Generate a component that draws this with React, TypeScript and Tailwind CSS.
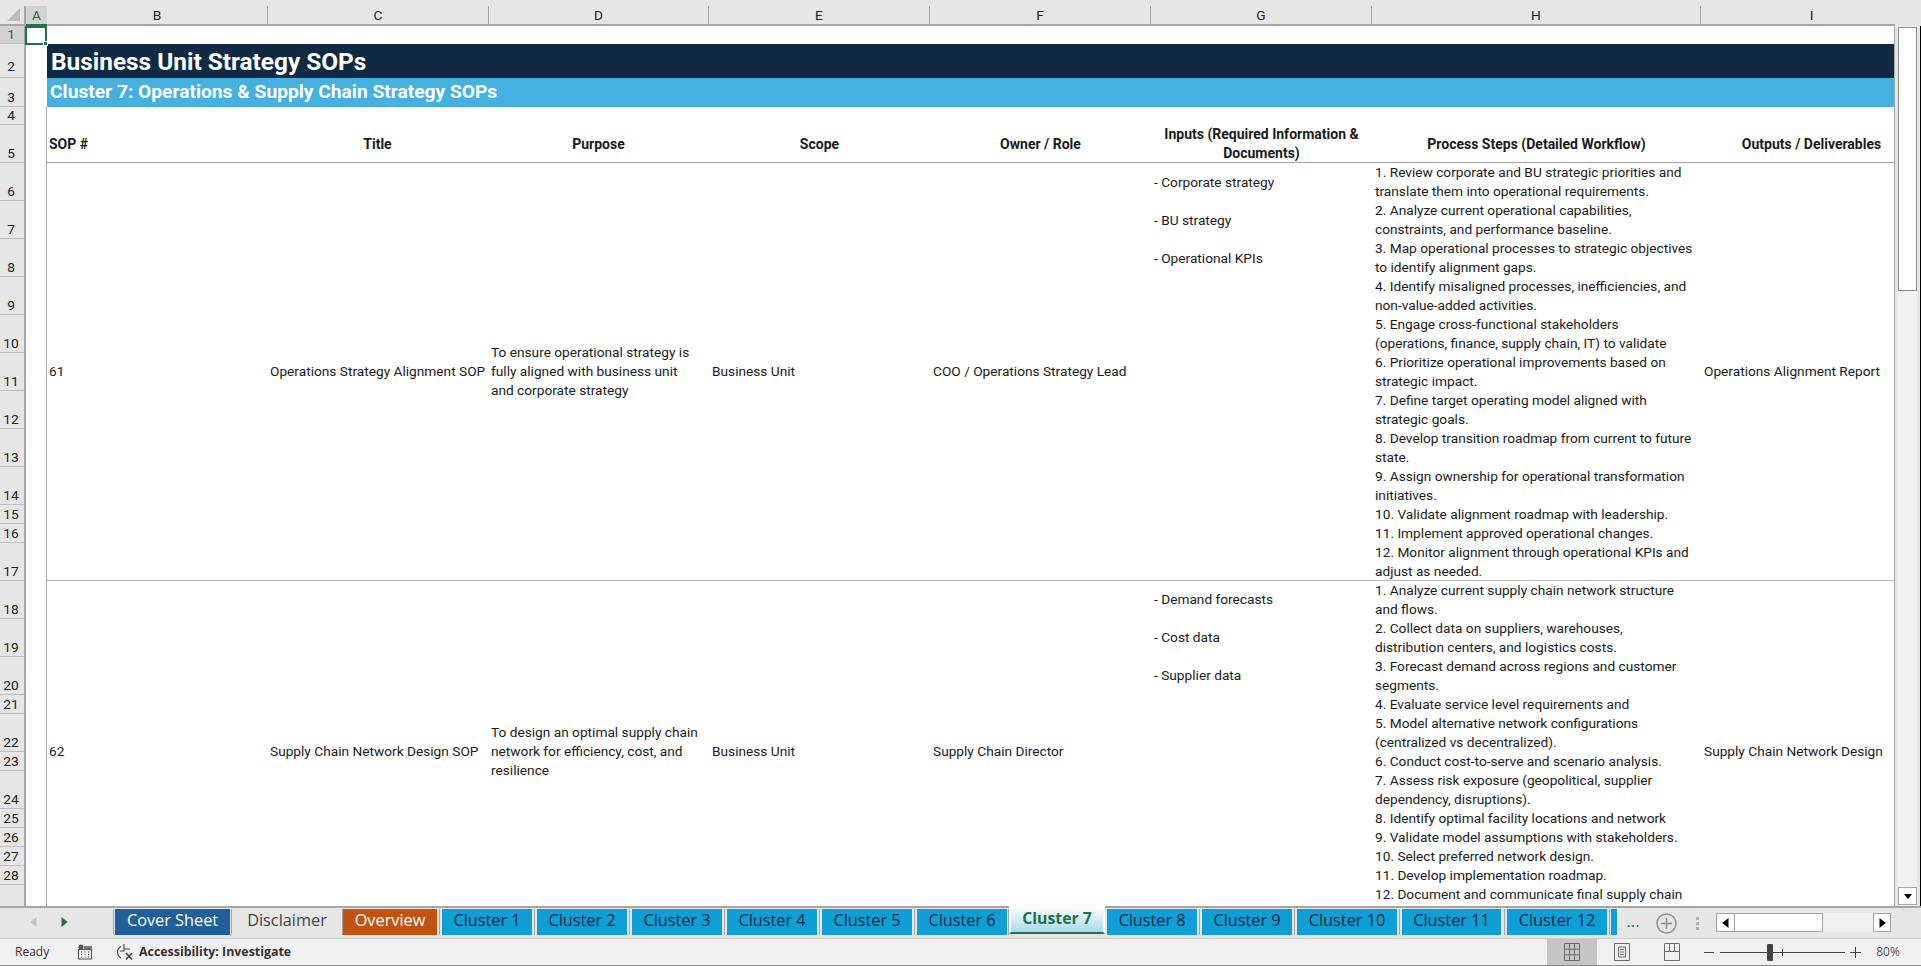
import React from "react";

const body = "font-['Roboto','Liberation_Sans',sans-serif]";
const ui = "font-['Open_Sans','Noto_Sans',sans-serif]";

const columns = [
  { l: "B", w: "w-[221px]" },
  { l: "C", w: "w-[221px]" },
  { l: "D", w: "w-[220px]" },
  { l: "E", w: "w-[221px]" },
  { l: "F", w: "w-[221px]" },
  { l: "G", w: "w-[221px]" },
  { l: "H", w: "w-[329px]" },
  { l: "I", w: "w-[221px]" },
];

const rowHeaders = [
  ["1", "h-[18px]"], ["2", "h-[34px] pb-[2px]"], ["3", "h-[29px]"], ["4", "h-[18px]"], ["5", "h-[38px]"],
  ["6", "h-[38px]"], ["7", "h-[38px]"], ["8", "h-[38px]"], ["9", "h-[38px]"], ["10", "h-[38px]"],
  ["11", "h-[38px]"], ["12", "h-[38px]"], ["13", "h-[38px]"], ["14", "h-[38px]"], ["15", "h-[19px]"],
  ["16", "h-[19px]"], ["17", "h-[38px]"], ["18", "h-[38px]"], ["19", "h-[38px]"], ["20", "h-[38px]"],
  ["21", "h-[19px]"], ["22", "h-[38px]"], ["23", "h-[19px]"], ["24", "h-[38px]"], ["25", "h-[19px]"],
  ["26", "h-[19px]"], ["27", "h-[19px]"], ["28", "h-[19px]"],
];

const rec1 = [
  "1. Review corporate and BU strategic priorities and",
  "translate them into operational requirements.",
  "2. Analyze current operational capabilities,",
  "constraints, and performance baseline.",
  "3. Map operational processes to strategic objectives",
  "to identify alignment gaps.",
  "4. Identify misaligned processes, inefficiencies, and",
  "non-value-added activities.",
  "5. Engage cross-functional stakeholders",
  "(operations, finance, supply chain, IT) to validate",
  "6. Prioritize operational improvements based on",
  "strategic impact.",
  "7. Define target operating model aligned with",
  "strategic goals.",
  "8. Develop transition roadmap from current to future",
  "state.",
  "9. Assign ownership for operational transformation",
  "initiatives.",
  "10. Validate alignment roadmap with leadership.",
  "11. Implement approved operational changes.",
  "12. Monitor alignment through operational KPIs and",
  "adjust as needed.",
];

const rec2 = [
  "1. Analyze current supply chain network structure",
  "and flows.",
  "2. Collect data on suppliers, warehouses,",
  "distribution centers, and logistics costs.",
  "3. Forecast demand across regions and customer",
  "segments.",
  "4. Evaluate service level requirements and",
  "5. Model alternative network configurations",
  "(centralized vs decentralized).",
  "6. Conduct cost-to-serve and scenario analysis.",
  "7. Assess risk exposure (geopolitical, supplier",
  "dependency, disruptions).",
  "8. Identify optimal facility locations and network",
  "9. Validate model assumptions with stakeholders.",
  "10. Select preferred network design.",
  "11. Develop implementation roadmap.",
  "12. Document and communicate final supply chain",
];

type Rec = {
  h: string; pad: string; sop: string; title: string; purpose: string[]; owner: string;
  inputs: string[]; steps: string[]; output: string;
};
const records: Rec[] = [
  {
    h: "h-[418px] border-b border-[#b8b8b8]", pad: "pt-[10px]", sop: "61", title: "Operations Strategy Alignment SOP",
    purpose: ["To ensure operational strategy is", "fully aligned with business unit", "and corporate strategy"],
    owner: "COO / Operations Strategy Lead",
    inputs: ["- Corporate strategy", "- BU strategy", "- Operational KPIs"],
    steps: rec1, output: "Operations Alignment Report",
  },
  {
    h: "h-[340px]", pad: "pt-[9px]", sop: "62", title: "Supply Chain Network Design SOP",
    purpose: ["To design an optimal supply chain", "network for efficiency, cost, and", "resilience"],
    owner: "Supply Chain Director",
    inputs: ["- Demand forecasts", "- Cost data", "- Supplier data"],
    steps: rec2, output: "Supply Chain Network Design",
  },
];

const tabs = [
  { t: "Cover Sheet", w: "w-[115px]", c: "bg-[#215f9a] text-white", s: "w-[3px]" },
  { t: "Disclaimer", w: "w-[108px]", c: "bg-[#e6e6e6] text-[#444444]", s: "w-[2px]" },
  { t: "Overview", w: "w-[94px]", c: "bg-[#c05311] text-white", s: "w-[5px]" },
  { t: "Cluster 1", w: "w-[90px]", c: "bg-[#0f9ed5] text-[#0c2a3a]", s: "w-[5px]" },
  { t: "Cluster 2", w: "w-[90px]", c: "bg-[#0f9ed5] text-[#0c2a3a]", s: "w-[5px]" },
  { t: "Cluster 3", w: "w-[90px]", c: "bg-[#0f9ed5] text-[#0c2a3a]", s: "w-[5px]" },
  { t: "Cluster 4", w: "w-[90px]", c: "bg-[#0f9ed5] text-[#0c2a3a]", s: "w-[5px]" },
  { t: "Cluster 5", w: "w-[90px]", c: "bg-[#0f9ed5] text-[#0c2a3a]", s: "w-[5px]" },
  { t: "Cluster 6", w: "w-[90px]", c: "bg-[#0f9ed5] text-[#0c2a3a]", s: "w-[2px]" },
];
const tabsAfter = [
  { t: "Cluster 8", w: "w-[90px]", s: "w-[5px]" },
  { t: "Cluster 9", w: "w-[90px]", s: "w-[5px]" },
  { t: "Cluster 10", w: "w-[100px]", s: "w-[5px]" },
  { t: "Cluster 11", w: "w-[99px]", s: "w-[6px]" },
  { t: "Cluster 12", w: "w-[100px]", s: "w-[4px]" },
];

function Sep({ w }: { w: string }) {
  return <div className={`${w} h-[26px] flex justify-center shrink-0`}><div className="w-px h-[26px] bg-[#a6a6a6]" /></div>;
}

function Cell({ w, children, cls = "" }: { w: string; children?: React.ReactNode; cls?: string }) {
  return <div className={`${w} shrink-0 px-[3px] overflow-hidden whitespace-nowrap ${cls}`}>{children}</div>;
}

function Triangle({ dir, color = "#000000", size = 8 }: { dir: "up" | "down" | "left" | "right"; color?: string; size?: number }) {
  const pts = { up: "0,8 8,8 4,3", down: "0,2 8,2 4,7", left: "6,0 6,8 1,4", right: "2,0 2,8 7,4" }[dir];
  return <svg width={size} height={size} viewBox="0 0 8 8"><polygon points={pts} fill={color} /></svg>;
}

export default function App() {
  return (
    <div className={`w-[1921px] h-[966px] flex flex-col overflow-hidden bg-[#e6e6e6] ${body} text-[13.7px] text-[#1a1a1a]`}>
      {/* column headers */}
      <div className="h-[26px] shrink-0 pt-[6px] flex items-stretch">
        <div className="w-[26px] shrink-0 border-b-2 border-r-2 border-[#a6a6a6] flex items-end justify-end pr-[4px] pb-[3px]">
          <svg width="13" height="13" viewBox="0 0 13 13"><polygon points="13,0 13,13 0,13" fill="#bdbdbd" /></svg>
        </div>
        <div className="w-[21px] shrink-0 bg-[#d2d2d2] border-b-2 border-[#217346] text-[#217346] text-center leading-[18px]">A</div>
        <div className="flex border-b-2 border-[#a6a6a6] w-[1848px] overflow-hidden">
          {columns.map((c) => (
            <div key={c.l} className={`${c.w} shrink-0 text-center leading-[18px] text-[#222222] border-r border-[#a6a6a6] last:border-r-0`}>{c.l}</div>
          ))}
        </div>
        <div className="flex-1" />
      </div>

      {/* sheet */}
      <div className="h-[880px] shrink-0 flex overflow-hidden relative">
        <div className="w-[26px] shrink-0 border-r-2 border-[#a6a6a6] overflow-hidden">
          {rowHeaders.map(([n, h], i) => (
            <div
              key={n}
              className={`${h} ${i === 0 ? "bg-[#d2d2d2] text-[#217346]" : "text-[#222222]"} border-b border-[#bdbdbd] flex items-end justify-center leading-[17px] pr-[2px]`}
            >
              {n}
            </div>
          ))}
        </div>

        <div className="w-[1869px] shrink-0 bg-white overflow-hidden border-r border-[#a6a6a6]">
          <div className="h-[18px]" />
          <div className="h-[34px] pl-[21px]">
            <div className="h-full bg-[#102a43] text-white font-bold text-[24.4px] leading-[35px] pl-[4px] whitespace-nowrap">Business Unit Strategy SOPs</div>
          </div>
          <div className="h-[29px] pl-[21px]">
            <div className="h-full bg-[#45b1e1] text-white font-bold text-[19.2px] leading-[28px] pl-[3px] whitespace-nowrap">Cluster 7: Operations &amp; Supply Chain Strategy SOPs</div>
          </div>
          <div className="flex h-[818px]">
            <div className="w-[21px] shrink-0 border-r border-[#a6a6a6]" />
            <div className="flex-1 min-w-0 overflow-hidden">
              <div className="h-[18px]" />
              <div className="h-[38px] pt-[1px] flex border-b border-[#a6a6a6] font-bold text-[14px] leading-[19px] items-center">
                <Cell w="w-[220px]" cls="pl-[2px]">SOP #</Cell>
                <Cell w="w-[221px]" cls="text-center">Title</Cell>
                <Cell w="w-[221px]" cls="text-center">Purpose</Cell>
                <Cell w="w-[221px]" cls="text-center">Scope</Cell>
                <Cell w="w-[221px]" cls="text-center">Owner / Role</Cell>
                <Cell w="w-[221px]" cls="text-center"><div>Inputs (Required Information &amp;</div><div>Documents)</div></Cell>
                <Cell w="w-[329px]" cls="text-center">Process Steps (Detailed Workflow)</Cell>
                <Cell w="w-[221px]" cls="text-center">Outputs / Deliverables</Cell>
              </div>
              {records.map((r) => (
                <div key={r.sop} className={`${r.h} flex leading-[19px]`}>
                  <Cell w="w-[220px]" cls="self-center pl-[2px]">{r.sop}</Cell>
                  <Cell w="w-[221px]" cls="self-center">{r.title}</Cell>
                  <Cell w="w-[221px]" cls="self-center">{r.purpose.map((p) => <div key={p}>{p}</div>)}</Cell>
                  <Cell w="w-[221px]" cls="self-center">Business Unit</Cell>
                  <Cell w="w-[221px]" cls="self-center">{r.owner}</Cell>
                  <Cell w="w-[221px]" cls={`${r.pad} flex flex-col gap-[19px]`}>{r.inputs.map((p) => <div key={p}>{p}</div>)}</Cell>
                  <Cell w="w-[329px]">{r.steps.map((p) => <div key={p}>{p}</div>)}</Cell>
                  <Cell w="w-[221px]" cls="self-center">{r.output}</Cell>
                </div>
              ))}
            </div>
          </div>
        </div>

        {/* vertical scrollbar */}
        <div className="flex-1 min-w-0 flex">
          <div className="w-[3px] bg-[#e6e6e6]" />
          <div className="w-[19px] flex flex-col bg-[#f0f0f0]">
            <div className="h-[18px] shrink-0 bg-white border border-[#a6a6a6] flex items-center justify-center -mt-[18px]"><Triangle dir="up" /></div>
            <div className="h-[264px] shrink-0 bg-white border border-[#8c8c8c] mt-px" />
            <div className="flex-1" />
            <div className="h-[18px] shrink-0 bg-white border border-[#a6a6a6] flex items-center justify-center mb-px"><Triangle dir="down" /></div>
          </div>
          <div className="flex-1 bg-[#e6e6e6]" />
          <div className="w-px bg-black" />
        </div>

        {/* active cell */}
        <div className="absolute left-[25px] top-0 w-[22px] h-[19px] border-2 border-[#217346]">
          <div className="absolute -right-[3px] -bottom-[3px] w-[5px] h-[5px] bg-[#217346] border border-white" />
        </div>
      </div>

      {/* tab strip */}
      <div className={`h-[32px] shrink-0 flex border-t-2 border-[#a6a6a6] ${ui} text-[16.3px] bg-[#e6e6e6]`}>
        <div className="w-[112px] shrink-0 flex items-center pl-[29px] gap-[20px] -mt-[2px]">
          <Triangle dir="left" color="#c4c4c4" size={10} />
          <Triangle dir="right" color="#217346" size={10} />
        </div>
        <div className="flex items-start pt-px h-full">
          <Sep w="w-[3px]" />
          {tabs.map((t) => (
            <React.Fragment key={t.t}>
              <div className={`${t.w} ${t.c} h-[26px] shrink-0 flex items-center justify-center whitespace-nowrap pb-[3px]`}>{t.t}</div>
              <Sep w={t.s} />
            </React.Fragment>
          ))}
          <div className="w-[96px] h-[28px] -mt-[3px] shrink-0 bg-gradient-to-b from-white to-[#a9d8ee] border-x-2 border-x-white border-b-2 border-b-[#217346] flex items-center justify-center font-bold text-[15.8px] text-[#217346]">Cluster 7</div>
          <div className="w-[2px] shrink-0" />
          {tabsAfter.map((t) => (
            <React.Fragment key={t.t}>
              <div className={`${t.w} h-[26px] shrink-0 bg-[#0f9ed5] text-[#0c2a3a] flex items-center justify-center whitespace-nowrap pb-[3px]`}>{t.t}</div>
              <Sep w={t.s} />
            </React.Fragment>
          ))}
          <div className="w-[6px] h-[26px] bg-[#0f9ed5] shrink-0" />
        </div>
        <div className="w-[32px] shrink-0 text-center text-[#217346] leading-[26px]">...</div>
        <div className="w-[34px] shrink-0 flex items-center justify-center">
          <svg width="21" height="21" viewBox="0 0 21 21" fill="none" stroke="#8f8f8f" strokeWidth="1.5"><circle cx="10.5" cy="10.5" r="9.5" /><path d="M10.5 5v11M5 10.5h11" /></svg>
        </div>
        <div className="w-[28px] shrink-0 flex flex-col items-center justify-center gap-[2px]">
          <div className="w-[3px] h-[3px] bg-[#b0b0b0]" />
          <div className="w-[3px] h-[3px] bg-[#b0b0b0]" />
          <div className="w-[3px] h-[3px] bg-[#b0b0b0]" />
        </div>
        <div className="ml-[5px] w-[175px] h-[19px] mt-[5px] shrink-0 flex bg-[#f0f0f0]">
          <div className="w-[19px] bg-white border border-[#a6a6a6] flex items-center justify-center"><Triangle dir="left" size={10} /></div>
          <div className="w-[88px] bg-white border border-[#a6a6a6] border-l-0" />
          <div className="flex-1" />
          <div className="w-[18px] bg-white border border-[#a6a6a6] flex items-center justify-center"><Triangle dir="right" size={10} /></div>
        </div>
      </div>

      {/* status bar */}
      <div className={`flex-1 min-h-0 flex items-center bg-[#f1f1f1] border-t border-[#cfcfcf] border-b border-b-[#8a8a8a] text-[12px] text-[#333333] ${ui}`}>
        <span className="ml-[15px] w-[62px]">Ready</span>
        <svg width="16" height="16" viewBox="0 0 16 16" className="mr-[23px]" fill="none">
          <circle cx="4" cy="3" r="2.6" fill="#555555" />
          <path d="M7 2h8v3H7z" fill="#777777" />
          <rect x="1.5" y="5.5" width="13" height="9.5" stroke="#555555" />
          <path d="M4 8h1M7.5 8h1M11 8h1M4 10.5h1M7.5 10.5h1M11 10.5h1M4 13h1M7.5 13h1M11 13h1" stroke="#555555" />
        </svg>
        <svg width="18" height="18" viewBox="0 0 18 18" fill="none" stroke="#444444" strokeWidth="1.1">
          <path d="M5 3.5A6.5 6.5 0 0 0 5 15" />
          <path d="M8 1v7h-4M8 6h6" />
          <path d="M10 10l6 6.5M16 10l-6 6.5" strokeWidth="1.7" />
        </svg>
        <span className="ml-[5px] font-bold text-[12.4px] text-[#333333]">Accessibility: Investigate</span>
        <div className="flex-1" />
        <div className="w-[50px] h-full bg-[#c6c6c6] flex items-center justify-center">
          <svg width="16" height="18" viewBox="0 0 16 18" fill="none" stroke="#6b6b6b"><path d="M.5.5h15v17H.5zM5.5.5v17M10.5.5v17M.5 6.2h15M.5 11.8h15" /></svg>
        </div>
        <div className="w-[50px] h-full flex items-center justify-center">
          <svg width="16" height="18" viewBox="0 0 16 18" fill="none" stroke="#6b6b6b"><path d="M.5.5h15v17H.5zM4.5 4h7v10h-7zM6 6.5h4M6 9h4M6 11.5h4" /></svg>
        </div>
        <div className="w-[50px] h-full flex items-center justify-center">
          <svg width="16" height="18" viewBox="0 0 16 18" fill="none" stroke="#6b6b6b"><path d="M.5.5h15v17H.5zM5.5.5v8h5V.5M.5 8.5h5M10.5 8.5h5" /></svg>
        </div>
        <div className="w-[10px] h-px bg-[#444444] ml-[7px] mr-[6px]" />
        <div className="w-[125px] h-px bg-[#444444] relative">
          <div className="absolute left-[47px] -top-[8px] w-[6px] h-[17px] bg-[#444444] rounded-[1px]" />
          <div className="absolute left-[62px] -top-[3px] w-px h-[7px] bg-[#444444]" />
        </div>
        <svg width="11" height="11" viewBox="0 0 11 11" className="ml-[5px]" stroke="#444444"><path d="M5.5 0v11M0 5.5h11" /></svg>
        <span className="w-[46px] text-center text-[#555555] pl-[8px] mr-[14px]">80%</span>
      </div>
    </div>
  );
}
